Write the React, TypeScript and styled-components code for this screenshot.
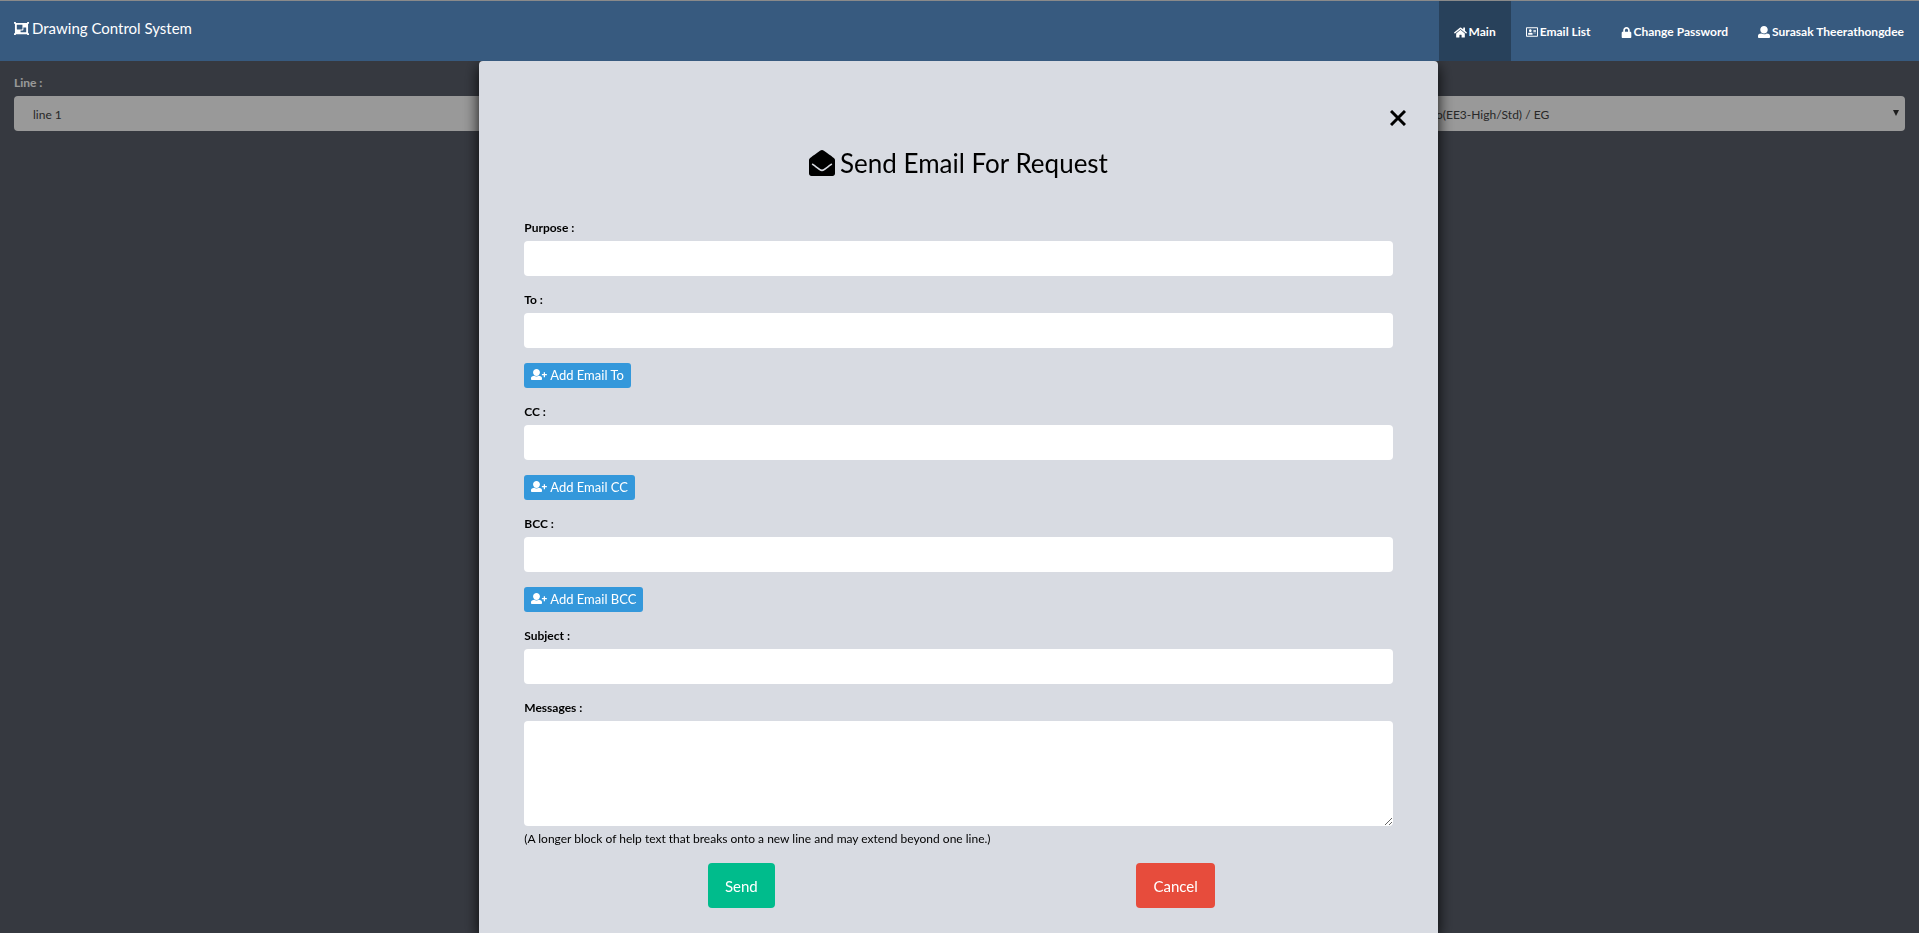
import React from 'react';
import styled, { createGlobalStyle } from 'styled-components';
import { FaHome, FaRegAddressCard, FaLock, FaEnvelopeOpen, FaObjectGroup } from 'react-icons/fa';

const GlobalStyle = createGlobalStyle`
  *, *::before, *::after { box-sizing: border-box; }
  body {
    margin: 0;
    background: #5b606c;
    color: #000;
    font-family: Lato, sans-serif;
    font-size: 12px;
    line-height: 18px;
  }
  button, input, select, textarea { font-family: inherit; }
`;

const Header = styled.header`
  position: relative;
  z-index: 2;
  display: flex;
  justify-content: space-between;
  height: 61px;
  padding-left: 14px;
  border-top: 1px solid #8a8a8a;
  background: #375a7f;
`;

const Brand = styled.a`
  display: flex;
  align-items: center;
  align-self: flex-start;
  gap: 3px;
  padding-top: 15px;
  color: #fff;
  font-size: 15px;
  line-height: 24px;
  text-decoration: none;
`;

const Nav = styled.nav`
  display: flex;
`;

const NavLink = styled.a<{ $active?: boolean }>`
  display: flex;
  align-items: center;
  gap: 2px;
  padding: 2px 15px 0;
  background: ${(p) => (p.$active ? '#28415b' : 'transparent')};
  color: #fff;
  font-weight: 700;
  text-decoration: none;
`;

const Filters = styled.main`
  display: grid;
  grid-template-columns: 1fr 488px;
  padding: 13px 14px;
`;

const Filter = styled.div`
  display: flex;
  flex-direction: column;
  justify-content: flex-end;
  gap: 4px;
`;

const FilterLabel = styled.label`
  color: #fff;
  font-weight: 700;
`;

const SelectBox = styled.div`
  position: relative;
`;

const Select = styled.select`
  display: block;
  width: 100%;
  height: 35px;
  padding: 2px 19px 0;
  appearance: none;
  border: 0;
  border-radius: 4px;
  background: #fff;
  color: #444;
  font-size: 12px;
`;

const Arrow = styled.svg`
  position: absolute;
  top: 13px;
  right: 5px;
  pointer-events: none;
`;

const Overlay = styled.div`
  position: fixed;
  inset: 61px 0 0;
  overflow: hidden;
  padding-right: 2px;
  background: rgba(0, 0, 0, 0.4);
`;

const Dialog = styled.section`
  width: 50%;
  min-height: 100%;
  margin: 0 auto;
  padding: 45px 45px 25px;
  border-radius: 4px 4px 0 0;
  background: #d8dbe2;
  box-shadow: 0 5px 15px rgba(0, 0, 0, 0.9);
`;

const CloseRow = styled.div`
  display: flex;
  justify-content: flex-end;
  margin-right: -15px;
`;

const CloseButton = styled.button`
  display: flex;
  padding: 4px 2px 2px;
  border: 0;
  background: none;
`;

const Title = styled.h1`
  display: flex;
  align-items: center;
  justify-content: center;
  gap: 5px;
  margin: 17px 0 38px;
  font-size: 26px;
  font-weight: 400;
  line-height: 36px;
`;

const Form = styled.form`
  display: flex;
  flex-direction: column;
  gap: 15px;
`;

const Field = styled.div`
  display: flex;
  flex-direction: column;
  gap: 4px;
`;

const Label = styled.label`
  font-weight: 700;
`;

const TextInput = styled.input`
  width: 100%;
  height: 35px;
  padding: 0 15px;
  border: 0;
  border-radius: 4px;
  background: #fff;
`;

const TextArea = styled.textarea`
  display: block;
  width: 100%;
  height: 105px;
  padding: 8px 15px;
  border: 0;
  border-radius: 4px;
  background: #fff;
  resize: vertical;
`;

const Help = styled.small`
  font-size: 12px;
`;

const AddButton = styled.button`
  display: flex;
  align-items: center;
  align-self: flex-start;
  gap: 3px;
  height: 25px;
  padding: 0 7px 2px;
  border: 0;
  border-radius: 3px;
  background: #3498db;
  color: #fff;
  font-size: 13px;
`;

const Actions = styled.div`
  display: grid;
  grid-template-columns: 1fr 1fr;
  justify-items: center;
`;

const ActionButton = styled.button<{ $danger?: boolean }>`
  height: 45px;
  padding: 0 17px;
  border: 0;
  border-radius: 4px;
  background: ${(p) => (p.$danger ? '#e74c3c' : '#00bc8c')};
  color: #fff;
  font-size: 15px;
`;

const PERSON =
  'M256 0c88.366 0 160 71.634 160 160s-71.634 160-160 160S96 248.366 96 160 167.634 0 256 0zm183.283 333.821l-71.313-17.828c-74.923 53.89-165.738 41.864-223.94 0l-71.313 17.828C29.981 344.505 0 382.903 0 426.955V464c0 26.51 21.49 48 48 48h416c26.51 0 48-21.49 48-48v-37.045c0-44.052-29.981-82.45-72.717-93.134z';

function UserIcon() {
  return (
    <svg width="12" height="12" viewBox="0 0 512 512" fill="currentColor" aria-hidden="true">
      <path d={PERSON} />
    </svg>
  );
}

function UserPlusIcon() {
  return (
    <svg width="16" height="13" viewBox="0 0 640 520" fill="currentColor" aria-hidden="true">
      <path d={PERSON} transform="translate(0 40) scale(.86)" />
      <path d="M510 170h50v70h75v50h-75v75h-50v-75h-75v-50h75z" />
    </svg>
  );
}

function SelectField({ id, label, option }: { id: string; label?: string; option: string }) {
  return (
    <Filter>
      {label && <FilterLabel htmlFor={id}>{label}</FilterLabel>}
      <SelectBox>
        <Select id={id}>
          <option>{option}</option>
        </Select>
        <Arrow width="8" height="8" viewBox="0 0 8 8" aria-hidden="true">
          <path d="M1 1h6L4 7z" fill="#333" />
        </Arrow>
      </SelectBox>
    </Filter>
  );
}

function InputField({ id, label }: { id: string; label: string }) {
  return (
    <Field>
      <Label htmlFor={id}>{label}</Label>
      <TextInput id={id} type="text" />
    </Field>
  );
}

function AddEmail({ kind }: { kind: string }) {
  return (
    <AddButton type="button">
      <UserPlusIcon />
      Add Email {kind}
    </AddButton>
  );
}

export default function App() {
  return (
    <>
      <GlobalStyle />
      <Header>
        <Brand href="#">
          <FaObjectGroup size={15} />
          Drawing Control System
        </Brand>
        <Nav>
          <NavLink href="#" $active><FaHome size={13} />Main</NavLink>
          <NavLink href="#"><FaRegAddressCard size={12} />Email List</NavLink>
          <NavLink href="#"><FaLock size={11} />Change Password</NavLink>
          <NavLink href="#"><UserIcon />Surasak Theerathongdee</NavLink>
        </Nav>
      </Header>
      <Filters>
        <SelectField id="line" label="Line :" option="line 1" />
        <SelectField id="model" option="o(EE3-High/Std) / EG" />
      </Filters>
      <Overlay>
        <Dialog role="dialog" aria-labelledby="dialog-title">
          <CloseRow>
            <CloseButton type="button" aria-label="Close">
              <svg width="16" height="16" viewBox="0 0 16 16" aria-hidden="true">
                <path d="M1 1l14 14M15 1L1 15" stroke="#000" strokeWidth="3" />
              </svg>
            </CloseButton>
          </CloseRow>
          <Title id="dialog-title">
            <FaEnvelopeOpen size={26} />
            Send Email For Request
          </Title>
          <Form>
            <InputField id="purpose" label="Purpose :" />
            <InputField id="to" label="To :" />
            <AddEmail kind="To" />
            <InputField id="cc" label="CC :" />
            <AddEmail kind="CC" />
            <InputField id="bcc" label="BCC :" />
            <AddEmail kind="BCC" />
            <InputField id="subject" label="Subject :" />
            <Field>
              <Label htmlFor="messages">Messages :</Label>
              <TextArea id="messages" aria-describedby="messages-help" />
              <Help id="messages-help">
                (A longer block of help text that breaks onto a new line and may extend beyond one line.)
              </Help>
            </Field>
            <Actions>
              <ActionButton type="button">Send</ActionButton>
              <ActionButton type="button" $danger>Cancel</ActionButton>
            </Actions>
          </Form>
        </Dialog>
      </Overlay>
    </>
  );
}
